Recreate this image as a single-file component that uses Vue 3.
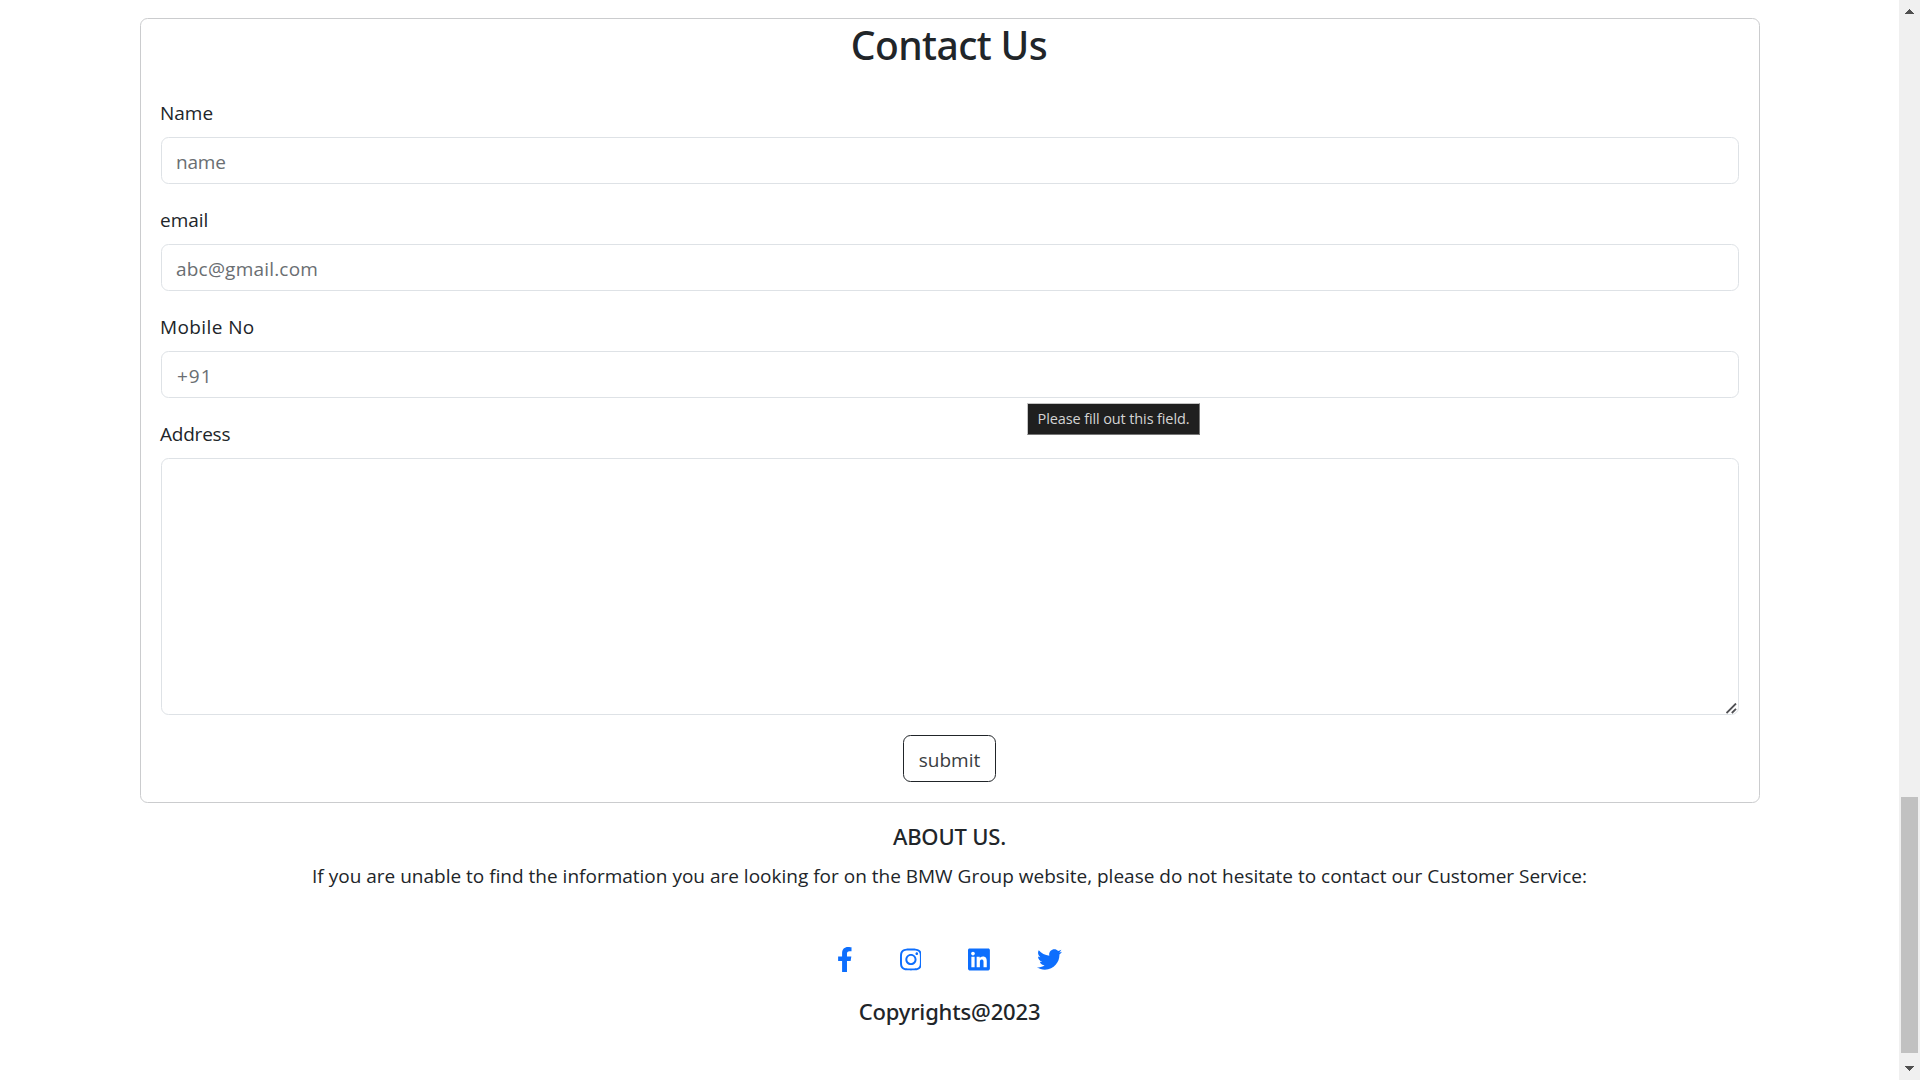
<script setup>
const fields = [
  { id: 'name', label: 'Name', type: 'text', placeholder: 'name' },
  { id: 'email', label: 'email', type: 'email', placeholder: 'abc@gmail.com' },
  { id: 'mobile', label: 'Mobile No', type: 'text', placeholder: '+91' },
]

const socials = [
  {
    name: 'Facebook',
    width: 320,
    path: 'M279.14 288l14.22-92.66h-88.91v-60.13c0-25.35 12.42-50.06 52.24-50.06h40.42V6.26S260.43 0 225.36 0c-73.22 0-121.08 44.38-121.08 124.72v70.62H22.89V288h81.39v224h100.17V288z',
  },
  {
    name: 'Instagram',
    width: 448,
    path: 'M224.1 141c-63.6 0-114.9 51.3-114.9 114.9s51.3 114.9 114.9 114.9S339 319.5 339 255.9 287.7 141 224.1 141zm0 189.6c-41.1 0-74.7-33.5-74.7-74.7s33.5-74.7 74.7-74.7 74.7 33.5 74.7 74.7-33.6 74.7-74.7 74.7zm146.4-194.3c0 14.9-12 26.8-26.8 26.8-14.9 0-26.8-12-26.8-26.8s12-26.8 26.8-26.8 26.8 12 26.8 26.8zm76.1 27.2c-1.7-35.9-9.9-67.7-36.2-93.9-26.2-26.2-58-34.4-93.9-36.2-37-2.1-147.9-2.1-184.9 0-35.8 1.7-67.6 9.9-93.9 36.1s-34.4 58-36.2 93.9c-2.1 37-2.1 147.9 0 184.9 1.7 35.9 9.9 67.7 36.2 93.9s58 34.4 93.9 36.2c37 2.1 147.9 2.1 184.9 0 35.9-1.7 67.7-9.9 93.9-36.2 26.2-26.2 34.4-58 36.2-93.9 2.1-37 2.1-147.8 0-184.8zM398.8 388c-7.8 19.6-22.9 34.7-42.6 42.6-29.5 11.7-99.5 9-132.1 9s-102.7 2.6-132.1-9c-19.6-7.8-34.7-22.9-42.6-42.6-11.7-29.5-9-99.5-9-132.1s-2.6-102.7 9-132.1c7.8-19.6 22.9-34.7 42.6-42.6 29.5-11.7 99.5-9 132.1-9s102.7-2.6 132.1 9c19.6 7.8 34.7 22.9 42.6 42.6 11.7 29.5 9 99.5 9 132.1s2.7 102.7-9 132.1z',
  },
  {
    name: 'LinkedIn',
    width: 448,
    path: 'M416 32H31.9C14.3 32 0 46.5 0 64.3v383.4C0 465.5 14.3 480 31.9 480H416c17.6 0 32-14.5 32-32.3V64.3c0-17.8-14.4-32.3-32-32.3zM135.4 416H69V202.2h66.5V416zm-33.2-243c-21.3 0-38.5-17.3-38.5-38.5S80.9 96 102.2 96c21.2 0 38.5 17.3 38.5 38.5 0 21.3-17.2 38.5-38.5 38.5zm282.1 243h-66.4V312c0-24.8-.5-56.7-34.5-56.7-34.6 0-39.9 27-39.9 54.9V416h-66.4V202.2h63.7v29.2h.9c8.9-16.8 30.6-34.5 62.9-34.5 67.2 0 79.7 44.3 79.7 101.9V416z',
  },
  {
    name: 'Twitter',
    width: 512,
    path: 'M459.37 151.716c.325 4.548.325 9.097.325 13.645 0 138.72-105.583 298.558-298.558 298.558-59.452 0-114.68-17.219-161.137-47.106 8.447.974 16.568 1.299 25.34 1.299 49.055 0 94.213-16.568 130.274-44.832-46.132-.975-84.792-31.188-98.112-72.772 6.498.974 12.995 1.624 19.818 1.624 9.421 0 18.843-1.3 27.614-3.573-48.081-9.747-84.143-51.98-84.143-102.985v-1.299c13.969 7.797 30.214 12.67 47.431 13.319-28.264-18.843-46.781-51.005-46.781-87.391 0-19.492 5.197-37.36 14.294-52.954 51.655 63.675 129.3 105.258 216.365 109.807-1.624-7.797-2.599-15.918-2.599-24.04 0-57.828 46.782-104.934 104.934-104.934 30.213 0 57.502 12.67 76.67 33.137 23.715-4.548 46.456-13.32 66.599-25.34-7.798 24.366-24.366 44.833-46.132 57.827 21.117-2.273 41.584-8.122 60.426-16.243-14.292 20.791-32.161 39.308-52.628 54.253z',
  },
]
</script>

<template>
  <div class="window">
    <main class="page">
      <form class="card" @submit.prevent>
        <h1>Contact Us</h1>
        <div v-for="f in fields" :key="f.id" class="field">
          <label :for="f.id" :class="'label-' + f.id">{{ f.label }}</label>
          <input :id="f.id" :class="'input-' + f.id" :type="f.type" :placeholder="f.placeholder" />
        </div>
        <div class="field">
          <label for="address" class="label-address">Address</label>
          <div class="area">
            <textarea id="address"></textarea>
            <svg class="grip" width="11" height="11" viewBox="0 0 11 11">
              <path d="M.5 10 10 .5M5.8 10 10 5.8" stroke="#505054" stroke-width="1.8" fill="none" />
            </svg>
          </div>
        </div>
        <button type="submit">submit</button>
        <div class="tooltip">Please fill out this field.</div>
      </form>

      <footer>
        <h5>ABOUT US.</h5>
        <p>If you are unable to find the information you are looking for on the BMW Group website, please do not hesitate to contact our Customer Service:</p>
        <nav>
          <a v-for="s in socials" :key="s.name" href="#" :aria-label="s.name">
            <svg :viewBox="`0 0 ${s.width} 512`" height="25" :width="(s.width * 25) / 512">
              <path :d="s.path" fill="currentColor" />
            </svg>
          </a>
        </nav>
        <h5>Copyrights@2023</h5>
      </footer>
    </main>

    <div class="scrollbar">
      <svg width="9" height="5" viewBox="0 0 9 5" shape-rendering="crispEdges"><path d="M4.5 0 9 5H0z" fill="#505050" /></svg>
      <div class="thumb"></div>
      <svg width="9" height="5" viewBox="0 0 9 5" shape-rendering="crispEdges"><path d="M0 0h9L4.5 5z" fill="#505050" /></svg>
    </div>
  </div>
</template>

<style>
body {
  margin: 0;
  background: #fff;
}
</style>

<style scoped>
* {
  box-sizing: border-box;
}
.window {
  display: flex;
  height: 1080px;
  overflow: hidden;
  color: #212529;
  font: 400 19px/30px "Segoe UI", "Open Sans", "Noto Sans", sans-serif;
}
.page {
  flex: 1;
  padding-top: 18px;
}
.card {
  position: relative;
  width: 1620px;
  height: 785px;
  margin: 0 auto 0 140px;
  padding: 0 20px;
  border: 1px solid #cbccce;
  border-radius: 7.5px;
}
h1 {
  margin: 0;
  padding: 1px 2px 28px 0;
  text-align: center;
  font: 550 39px/50px "Segoe UI", "Noto Sans", sans-serif;
  letter-spacing: -0.6px;
}
.field {
  margin-bottom: 20px;
}
label {
  display: block;
  margin: 0 0 9px -1px;
}
.field + .field label {
  padding-top: 1px;
}
.label-mobile {
  letter-spacing: 0.4px;
}
.label-address {
  letter-spacing: -0.22px;
}
input,
textarea {
  display: block;
  width: 100%;
  height: 47px;
  margin: 0;
  padding: 2px 15px 0 14px;
  border: 1px solid #dee2e6;
  border-radius: 7.5px;
  outline: 0;
  background: #fff;
  color: #212529;
  font: inherit;
}
input::placeholder {
  color: #6a6e72;
  opacity: 1;
}
.input-name {
  letter-spacing: -0.2px;
}
.input-email {
  letter-spacing: 0.2px;
}
.input-mobile {
  padding-left: 15px;
  letter-spacing: 1px;
}
.area {
  position: relative;
}
textarea {
  height: 257px;
  resize: none;
}
.grip {
  position: absolute;
  right: 2px;
  bottom: 1px;
}
button {
  display: block;
  width: 93px;
  height: 47px;
  margin: 0 auto 0 742px;
  padding: 2px 0 0;
  border: 1px solid #212529;
  border-radius: 7.5px;
  background: transparent;
  color: #3a3d41;
  font: inherit;
}
.tooltip {
  position: absolute;
  left: 886px;
  top: 384px;
  width: 173px;
  height: 32px;
  border: 1px solid #767676;
  border-top-color: #c4c4c4;
  border-left-color: #c4c4c4;
  background: #1f1f1f;
  color: #d4d4d4;
  font-size: 14.5px;
  line-height: 29px;
  letter-spacing: -0.12px;
  text-align: center;
  white-space: nowrap;
}
footer {
  padding-top: 18px;
  text-align: center;
}
h5 {
  margin: 0;
  font: 550 22px/30px "Segoe UI", "Noto Sans", sans-serif;
  letter-spacing: -0.16px;
}
p {
  margin: 10px 0 56px;
}
nav {
  display: flex;
  justify-content: center;
  gap: 46.7px;
  margin-bottom: 24px;
}
nav a {
  display: flex;
  color: #0d6efd;
}
.scrollbar {
  display: flex;
  flex-direction: column;
  align-items: center;
  width: 21px;
  padding: 9px 0;
  background: #f0f0f0;
}
.thumb {
  width: 17px;
  height: 256px;
  margin: auto 0 13px;
  background: #c1c1c1;
}
</style>
